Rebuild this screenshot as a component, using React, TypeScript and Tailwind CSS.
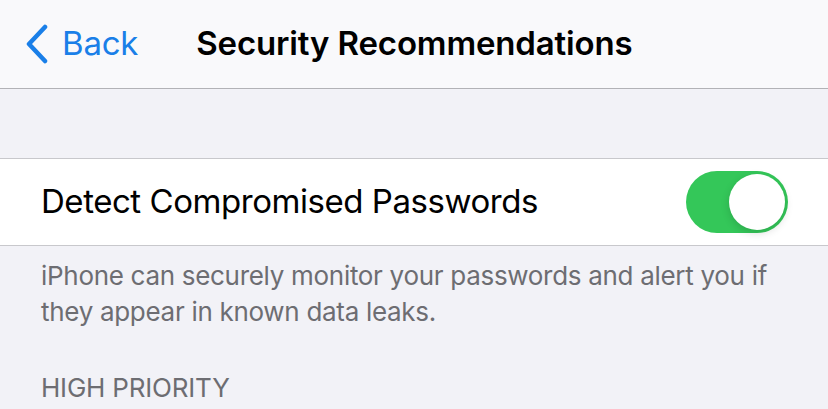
import React from "react";

function Toggle({ on }: { on: boolean }) {
  return (
    <div
      className={`flex h-[62px] w-[102px] items-center rounded-full p-[3px] ${
        on ? "justify-end bg-[#34c759]" : "justify-start bg-[#e9e9eb]"
      }`}
    >
      <div className="h-[56px] w-[56px] rounded-full bg-white shadow-[0_3px_8px_rgba(0,0,0,0.15)]" />
    </div>
  );
}

export default function App() {
  return (
    <div className="h-[409px] w-[828px] overflow-hidden bg-[#f2f2f7] font-['Inter','Liberation_Sans',sans-serif] antialiased">
      <header className="flex h-[89px] items-center border-b border-[#b2b2b6] bg-[#f9f9fb] pl-[24px]">
        <button className="flex items-center gap-[12px] text-[#1a7fe8]">
          <svg width="26" height="40" viewBox="0 0 26 40" fill="none">
            <path
              d="M21 3 L5 20 L21 37"
              stroke="currentColor"
              strokeWidth="4.5"
              strokeLinecap="round"
              strokeLinejoin="round"
            />
          </svg>
          <span className="text-[33px] tracking-[-0.2px]">Back</span>
        </button>
        <h1 className="ml-[58px] text-[33px] font-semibold tracking-[-0.15px] text-black">
          Security Recommendations
        </h1>
      </header>

      <div className="h-[69px]" />

      <div className="flex h-[88px] items-center justify-between border-y border-[#c8c8cc] bg-white pl-[41px] pr-[40px]">
        <span className="text-[33px] tracking-[-0.45px] text-black">Detect Compromised Passwords</span>
        <Toggle on />
      </div>

      <p className="px-[41px] pt-[12px] text-[26px] leading-[36px] tracking-[-0.3px] text-[#6d6d72]">
        iPhone can securely monitor your passwords and alert you if they appear in known data leaks.
      </p>

      <h2 className="mt-[40px] px-[41px] text-[26px] leading-[36px] tracking-[-0.2px] text-[#6d6d72]">HIGH PRIORITY</h2>
    </div>
  );
}
